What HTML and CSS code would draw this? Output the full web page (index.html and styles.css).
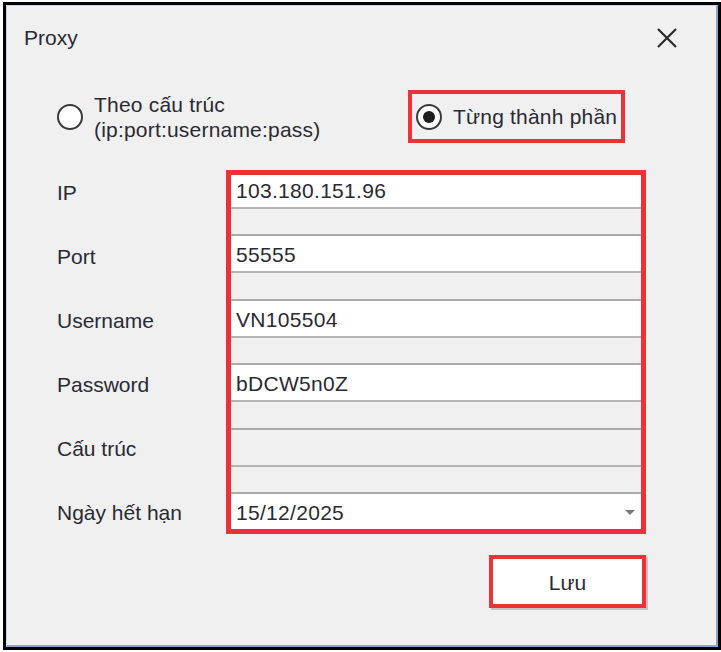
FILE: index.html
```html
<!DOCTYPE html>
<html lang="vi">
<head>
<meta charset="utf-8">
<title>Proxy</title>
<link rel="stylesheet" href="styles.css">
</head>
<body>
<div class="window">
  <div class="frame">
    <div class="header">
      <span class="title">Proxy</span>
      <svg class="close" width="22" height="22" viewBox="0 0 22 22"><path d="M2 2 L20 20 M20 2 L2 20" stroke="#2b2b2b" stroke-width="2.2" fill="none"/></svg>
    </div>
    <div class="options">
      <div class="option option-one">
        <span class="radio"></span>
        <span class="option-text">Theo cấu trúc<br>(ip:port:username:pass)</span>
      </div>
      <div class="option option-two">
        <span class="radio checked"><span class="dot"></span></span>
        <span class="option-text">Từng thành phần</span>
      </div>
    </div>
    <div class="form">
      <div class="labels">
        <div class="label">IP</div>
        <div class="label">Port</div>
        <div class="label">Username</div>
        <div class="label">Password</div>
        <div class="label">Cấu trúc</div>
        <div class="label">Ngày hết hạn</div>
      </div>
      <div class="fields">
        <div class="field">103.180.151.96</div>
        <div class="field">55555</div>
        <div class="field">VN105504</div>
        <div class="field">bDCW5n0Z</div>
        <div class="field disabled"></div>
        <div class="field date">15/12/2025<span class="arrow"></span></div>
      </div>
    </div>
    <div class="actions">
      <div class="save">Lưu</div>
    </div>
  </div>
</div>
</body>
</html>
```

FILE: styles.css
```css
html, body {
  margin: 0;
  padding: 0;
  background: #ffffff;
}
body {
  font-family: "Liberation Sans", Arial, sans-serif;
  font-size: 21px;
  color: #2a2a33;
}
.window {
  box-sizing: border-box;
  width: 718px;
  height: 648px;
  margin: 2px 0 0 3px;
  border: 3px solid #000;
  background: #f0f0f0;
}
.frame {
  box-sizing: border-box;
  height: 100%;
  border-top: 1px solid #c9d4e4;
  border-left: 1px solid #c9d4e4;
  border-right: 2px solid #8ea3c4;
  border-bottom: 2px solid #8ea3c4;
}
.header {
  height: 64px;
  display: flex;
  align-items: center;
  justify-content: space-between;
  padding: 0 38px 0 17px;
}
.title {
  line-height: 24px;
}
.close {
  display: block;
}
.options {
  display: flex;
  align-items: center;
  margin-top: 20px;
  padding-left: 50px;
  height: 53px;
}
.option {
  display: flex;
  align-items: center;
  gap: 11px;
}
.option-one {
  width: 351px;
  flex: none;
}
.option-text {
  line-height: 25px;
  letter-spacing: 0.2px;
}
.option-two {
  box-sizing: border-box;
  width: 217px;
  height: 53px;
  border: 4px solid #ec3237;
  padding-left: 4px;
}
.radio {
  box-sizing: border-box;
  width: 26px;
  height: 26px;
  border: 2px solid #3a3a3a;
  border-radius: 50%;
  background: #fff;
  display: flex;
  align-items: center;
  justify-content: center;
  flex: none;
}
.dot {
  width: 12px;
  height: 12px;
  border-radius: 50%;
  background: #1e1e1e;
}
.form {
  display: flex;
  margin-top: 27px;
  padding-left: 50px;
}
.labels {
  width: 169px;
  display: flex;
  flex-direction: column;
  gap: 25px;
}
.label {
  height: 39px;
  line-height: 39px;
  padding-top: 3px;
  box-sizing: border-box;
}
.fields {
  width: 420px;
  height: 364px;
  box-sizing: border-box;
  display: flex;
  flex-direction: column;
  gap: 25.4px;
  outline: 5px solid #ec3237;
  outline-offset: -5px;
}
.field {
  box-sizing: border-box;
  height: 39px;
  border-top: 2px solid #ababab;
  border-bottom: 2px solid #b4b4b4;
  background: #fff;
  padding: 2px 11px 0 10px;
  line-height: 33px;
  letter-spacing: 0.3px;
  display: flex;
  align-items: center;
}
.field.disabled {
  background: #f0f0f0;
}
.arrow {
  margin-left: auto;
  width: 0;
  height: 0;
  border-left: 5px solid transparent;
  border-right: 5px solid transparent;
  border-top: 5px solid #7a7a7a;
}
.actions {
  display: flex;
  justify-content: flex-end;
  margin-top: 21px;
  padding-right: 70px;
}
.save {
  box-sizing: border-box;
  width: 157px;
  height: 53px;
  padding-top: 2px;
  background: #fff;
  outline: 4px solid #ec3237;
  outline-offset: -4px;
  box-shadow: 2px 2px 0 #c4c4c4;
  display: flex;
  align-items: center;
  justify-content: center;
}
```
